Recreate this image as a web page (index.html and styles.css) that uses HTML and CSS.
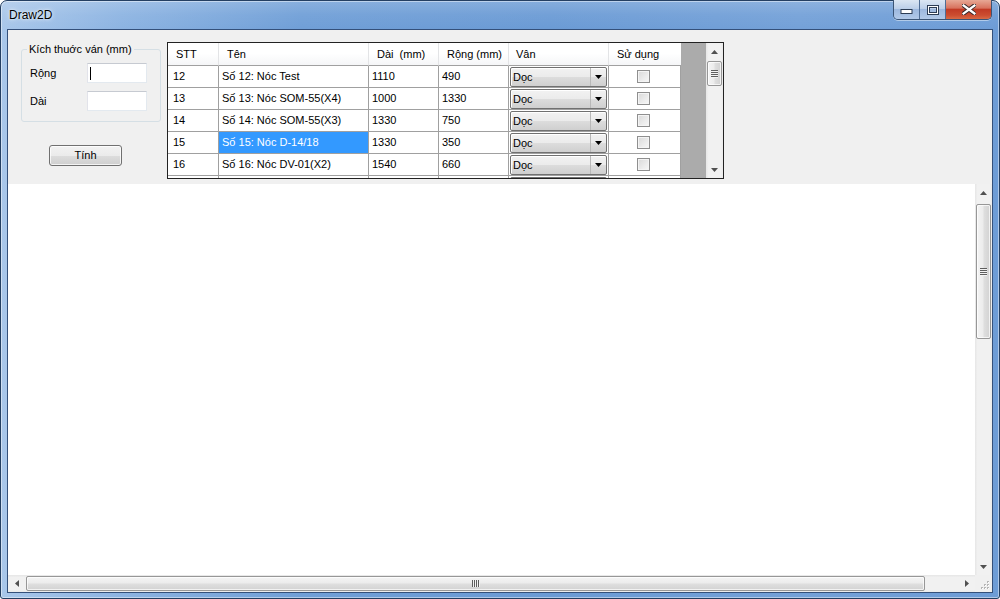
FILE: index.html
```html
<!DOCTYPE html>
<html lang="vi">
<head>
<meta charset="utf-8">
<title>Draw2D</title>
<link rel="stylesheet" href="styles.css">
</head>
<body>
<div class="window">
  <div class="titlebar">
    <span class="title">Draw2D</span>
    <div class="caption">
      <div class="cap">
        <svg width="13" height="7" viewBox="0 0 13 7"><rect x="1" y="2.5" width="11" height="4" fill="#fff" stroke="#2d3d55" stroke-width="1"/></svg>
      </div>
      <div class="cap">
        <svg width="12" height="10" viewBox="0 0 12 10"><rect x="1.5" y="1.5" width="9" height="7" fill="none" stroke="#2d3d55" stroke-width="3"/><rect x="1.5" y="1.5" width="9" height="7" fill="none" stroke="#fff" stroke-width="1"/></svg>
      </div>
      <div class="cap close">
        <svg width="14" height="11" viewBox="0 0 14 11"><path d="M1 1 L13 10 M13 1 L1 10" stroke="#3a2a2a" stroke-width="4.2" stroke-linecap="square"/><path d="M1.5 1.5 L12.5 9.5 M12.5 1.5 L1.5 9.5" stroke="#fff" stroke-width="2.2" stroke-linecap="square"/></svg>
      </div>
    </div>
  </div>
  <div class="frame-body">
    <div class="client">
      <div class="top-panel">
        <div class="side">
          <fieldset class="group">
            <legend>Kích thuớc ván (mm)</legend>
            <div class="field"><span class="label">Rộng</span><div class="textbox"><span class="caret"></span></div></div>
            <div class="field"><span class="label">Dài</span><div class="textbox"></div></div>
          </fieldset>
          <div class="button">Tính</div>
        </div>
        <div class="grid">
          <div class="grid-body">
            <div class="row head">
              <div class="cell h stt">STT</div>
              <div class="cell h">Tên</div>
              <div class="cell h">Dài&nbsp; (mm)</div>
              <div class="cell h">Rộng (mm)</div>
              <div class="cell h van">Vân</div>
              <div class="cell h">Sử dụng</div>
            </div>
            <div class="row">
              <div class="cell stt">12</div><div class="cell">Số 12: Nóc Test</div><div class="cell">1110</div><div class="cell">490</div>
              <div class="cell combo-cell"><div class="combo"><span class="combo-text">Dọc</span><span class="combo-btn"><svg width="7" height="4" viewBox="0 0 7 4"><path d="M0 0H7L3.5 4Z" fill="#000"/></svg></span></div></div>
              <div class="cell check-cell"><span class="check"></span></div>
            </div>
            <div class="row">
              <div class="cell stt">13</div><div class="cell">Số 13: Nóc SOM-55(X4)</div><div class="cell">1000</div><div class="cell">1330</div>
              <div class="cell combo-cell"><div class="combo"><span class="combo-text">Dọc</span><span class="combo-btn"><svg width="7" height="4" viewBox="0 0 7 4"><path d="M0 0H7L3.5 4Z" fill="#000"/></svg></span></div></div>
              <div class="cell check-cell"><span class="check"></span></div>
            </div>
            <div class="row">
              <div class="cell stt">14</div><div class="cell">Số 14: Nóc SOM-55(X3)</div><div class="cell">1330</div><div class="cell">750</div>
              <div class="cell combo-cell"><div class="combo"><span class="combo-text">Dọc</span><span class="combo-btn"><svg width="7" height="4" viewBox="0 0 7 4"><path d="M0 0H7L3.5 4Z" fill="#000"/></svg></span></div></div>
              <div class="cell check-cell"><span class="check"></span></div>
            </div>
            <div class="row">
              <div class="cell stt">15</div><div class="cell selected">Số 15: Nóc D-14/18</div><div class="cell">1330</div><div class="cell">350</div>
              <div class="cell combo-cell"><div class="combo"><span class="combo-text">Dọc</span><span class="combo-btn"><svg width="7" height="4" viewBox="0 0 7 4"><path d="M0 0H7L3.5 4Z" fill="#000"/></svg></span></div></div>
              <div class="cell check-cell"><span class="check"></span></div>
            </div>
            <div class="row">
              <div class="cell stt">16</div><div class="cell">Số 16: Nóc DV-01(X2)</div><div class="cell">1540</div><div class="cell">660</div>
              <div class="cell combo-cell"><div class="combo"><span class="combo-text">Dọc</span><span class="combo-btn"><svg width="7" height="4" viewBox="0 0 7 4"><path d="M0 0H7L3.5 4Z" fill="#000"/></svg></span></div></div>
              <div class="cell check-cell"><span class="check"></span></div>
            </div>
            <div class="row">
              <div class="cell stt"></div><div class="cell"></div><div class="cell"></div><div class="cell"></div>
              <div class="cell combo-cell"><div class="combo"></div></div>
              <div class="cell check-cell"></div>
            </div>
          </div>
          <div class="grid-empty"></div>
          <div class="vscroll small">
            <div class="sb-btn"><svg width="7" height="4" viewBox="0 0 7 4"><path d="M0 4H7L3.5 0Z" fill="#505050"/></svg></div>
            <div class="sb-track">
              <div class="thumb-v small-thumb"><span class="grip-v"></span></div>
            </div>
            <div class="sb-btn"><svg width="7" height="4" viewBox="0 0 7 4"><path d="M0 0H7L3.5 4Z" fill="#505050"/></svg></div>
          </div>
        </div>
      </div>
      <div class="canvas-panel">
        <div class="canvas"></div>
        <div class="vscroll big">
          <div class="sb-btn"><svg width="7" height="4" viewBox="0 0 7 4"><path d="M0 4H7L3.5 0Z" fill="#505050"/></svg></div>
          <div class="sb-track">
            <div class="thumb-v big-thumb"><span class="grip-v"></span></div>
          </div>
          <div class="sb-btn"><svg width="7" height="4" viewBox="0 0 7 4"><path d="M0 0H7L3.5 4Z" fill="#505050"/></svg></div>
        </div>
        <div class="hscroll">
          <div class="sb-btn"><svg width="4" height="7" viewBox="0 0 4 7"><path d="M4 0V7L0 3.5Z" fill="#505050"/></svg></div>
          <div class="sb-track h">
            <div class="thumb-h"><span class="grip-h"></span></div>
          </div>
          <div class="sb-btn"><svg width="4" height="7" viewBox="0 0 4 7"><path d="M0 0V7L4 3.5Z" fill="#505050"/></svg></div>
        </div>
        <div class="corner">
          <svg width="17" height="17" viewBox="0 0 17 17">
            <g fill="#b5b5b5">
              <rect x="12" y="6" width="2" height="2"/>
              <rect x="9" y="9" width="2" height="2"/><rect x="12" y="9" width="2" height="2"/>
              <rect x="6" y="12" width="2" height="2"/><rect x="9" y="12" width="2" height="2"/><rect x="12" y="12" width="2" height="2"/>
            </g>
            <g fill="#fff">
              <rect x="13" y="7" width="1" height="1"/>
              <rect x="10" y="10" width="1" height="1"/><rect x="13" y="10" width="1" height="1"/>
              <rect x="7" y="13" width="1" height="1"/><rect x="10" y="13" width="1" height="1"/><rect x="13" y="13" width="1" height="1"/>
            </g>
          </svg>
        </div>
      </div>
    </div>
  </div>
</div>
</body>
</html>
```
FILE: styles.css
```css
html, body {
  margin: 0;
  padding: 0;
  width: 1000px;
  height: 599px;
  overflow: hidden;
  background: #fff;
  font-family: "Liberation Sans", Arial, sans-serif;
  font-size: 11px;
  color: #000;
}

.window {
  box-sizing: border-box;
  width: 1000px;
  height: 599px;
  border: 1px solid #243f62;
  border-radius: 7px 7px 3px 3px;
  background:
    linear-gradient(180deg, rgba(255,255,255,0.18) 0px, rgba(255,255,255,0.05) 14px, rgba(0,0,0,0) 28px),
    linear-gradient(90deg, #a9c7ea 0%, #8db4e2 12%, #709fd7 30%, #6b9bd5 55%, #74a1d8 80%, #6d9cd6 100%);
  box-shadow: inset 0 0 0 1px rgba(255,255,255,0.45);
  display: flex;
  flex-direction: column;
}

.titlebar {
  flex: none;
  height: 28px;
  display: flex;
  justify-content: space-between;
  align-items: flex-start;
  padding-left: 8px;
}

.title {
  line-height: 29px;
  font-size: 12px;
  color: #000;
  text-shadow: 0 0 5px rgba(255,255,255,0.9), 0 0 2px rgba(255,255,255,0.8);
}

.caption {
  display: flex;
  height: 19px;
  margin: -1px 7px 0 0;
  border: 1px solid #3b5475;
  border-top: none;
  border-radius: 0 0 5px 5px;
  overflow: hidden;
  box-shadow: 0 1px 0 rgba(255,255,255,0.45);
}

.cap {
  width: 26px;
  border-right: 1px solid #4f6d95;
  background: linear-gradient(180deg, #dbe6f3 0%, #bccfe9 45%, #9db8de 50%, #b2c9e8 100%);
  display: flex;
  align-items: flex-start;
  justify-content: center;
  padding-top: 5px;
  box-sizing: border-box;
}

.cap:first-child {
  padding-top: 7px;
}

.cap.close {
  width: 45px;
  border-right: none;
  background: linear-gradient(180deg, #e7a895 0%, #d8735e 42%, #c23b25 50%, #cc4d30 80%, #d86a45 100%);
  padding-top: 4px;
}

.frame-body {
  flex: 1;
  display: flex;
  padding: 0 6px 5px 6px;
}

.client {
  flex: 1;
  display: flex;
  flex-direction: column;
  border: 1px solid #34507a;
  background: #f0f0f0;
}

/* top panel */
.top-panel {
  flex: none;
  height: 154px;
  display: flex;
}

.side {
  flex: none;
  width: 159px;
  box-sizing: border-box;
  padding: 13px 0 0 13px;
}

.group {
  box-sizing: border-box;
  width: 140px;
  margin: 0;
  padding: 7px 0 10px 8px;
  border: 1px solid #d5dfe5;
  border-radius: 3px;
  min-inline-size: 0;
}

.group legend {
  padding: 0 2px;
  margin-left: -3px;
  line-height: 13px;
  font-size: 11px;
}

.field {
  display: flex;
  align-items: center;
  height: 20px;
}

.field + .field {
  margin-top: 8px;
}

.label {
  width: 57px;
  flex: none;
}

.textbox {
  box-sizing: border-box;
  width: 60px;
  height: 20px;
  background: #fff;
  border: 1px solid;
  border-color: #c6cad1 #e3e9ef #e3e9ef #e2e3ea;
  display: flex;
  align-items: center;
  padding-left: 2px;
}

.caret {
  width: 1px;
  height: 13px;
  background: #000;
}

.button {
  box-sizing: border-box;
  width: 73px;
  height: 21px;
  margin: 23px 0 0 28px;
  border: 1px solid #707070;
  border-radius: 3px;
  background: linear-gradient(180deg, #f2f2f2 0%, #ebebeb 50%, #dddddd 50%, #cfcfcf 100%);
  box-shadow: inset 0 0 0 1px rgba(255,255,255,0.75);
  display: flex;
  align-items: center;
  justify-content: center;
  line-height: 19px;
}

/* data grid */
.grid {
  flex: none;
  box-sizing: border-box;
  width: 557px;
  height: 137px;
  margin-top: 12px;
  border: 1px solid #222;
  display: flex;
  background: #ababab;
}

.grid-body {
  flex: none;
  width: 513px;
  overflow: hidden;
  background: #fff;
}

.grid-empty {
  flex: 1;
  background: #ababab;
}

.row {
  display: grid;
  grid-template-columns: 51px 150px 70px 70px 100px 72px;
  height: 22px;
}

.row.head {
  height: 23px;
  background: linear-gradient(180deg, #ffffff 0%, #ffffff 45%, #f4f5f7 100%);
}

.cell {
  box-sizing: border-box;
  border-right: 1px solid #a0a0a0;
  border-bottom: 1px solid #a0a0a0;
  padding-left: 3px;
  line-height: 21px;
  white-space: nowrap;
  overflow: hidden;
}

.cell.stt {
  padding-left: 5px;
}

.cell.h {
  padding-left: 8px;
  line-height: 23px;
  border-right-color: #e3e4e6;
  border-bottom-color: #a0a0a0;
}

.cell.h.stt {
  padding-left: 8px;
}

.cell.h.van {
  padding-left: 7px;
}

.cell.h:last-child {
  border-right: none;
}

.cell.selected {
  background: #3399ff;
  color: #fff;
}

.cell.combo-cell {
  padding: 1px 0 0 1px;
}

.combo {
  box-sizing: border-box;
  width: 97px;
  height: 20px;
  border: 1px solid #707070;
  border-radius: 2px;
  background: linear-gradient(180deg, #f2f2f2 0%, #ebebeb 50%, #dddddd 50%, #cfcfcf 100%);
  box-shadow: inset 1px 1px 0 #fff;
  display: flex;
  align-items: stretch;
}

.combo-text {
  flex: 1;
  padding-left: 2px;
  line-height: 18px;
}

.combo-btn {
  width: 15px;
  border-left: 1px solid #b8b8b8;
  display: flex;
  align-items: center;
  justify-content: center;
}

.cell.check-cell {
  padding: 0;
  display: flex;
  align-items: center;
  justify-content: center;
}

.check {
  box-sizing: border-box;
  width: 13px;
  height: 13px;
  border: 1px solid #8f8f8f;
  background: linear-gradient(135deg, #d9d9d9 0%, #ececec 60%, #f7f7f7 100%);
  box-shadow: inset 0 0 0 1px #f4f4f4;
  margin-left: -2px;
}

/* scrollbars */
.vscroll {
  width: 17px;
  flex: none;
  display: flex;
  flex-direction: column;
  background: linear-gradient(90deg, #e6e6e6 0%, #f1f1f1 15%, #f1f1f1 85%, #ebebeb 100%);
}

.sb-btn {
  flex: none;
  width: 17px;
  height: 17px;
  display: flex;
  align-items: center;
  justify-content: center;
}

.sb-track {
  flex: 1;
  display: flex;
  flex-direction: column;
  align-items: center;
}

.thumb-v {
  box-sizing: border-box;
  width: 15px;
  border: 1px solid #979797;
  border-radius: 2px;
  background: linear-gradient(90deg, #f4f4f4 0%, #ececec 45%, #dedede 55%, #d2d2d2 100%);
  box-shadow: inset 0 0 0 1px rgba(255,255,255,0.7);
  display: flex;
  align-items: center;
  justify-content: center;
}

.small-thumb {
  height: 25px;
  margin-top: 1px;
}

.big-thumb {
  height: 135px;
  margin-top: 3px;
}

.grip-v {
  width: 7px;
  height: 8px;
  background: repeating-linear-gradient(180deg, #5e5e5e 0 1px, #f2f2f2 1px 2px);
}

.canvas-panel {
  flex: 1;
  display: grid;
  grid-template-columns: 1fr 17px;
  grid-template-rows: 1fr 17px;
}

.canvas {
  background: #fff;
}

.hscroll {
  display: flex;
  background: linear-gradient(180deg, #e6e6e6 0%, #f1f1f1 15%, #f1f1f1 85%, #ebebeb 100%);
}

.sb-track.h {
  flex-direction: row;
  align-items: center;
}

.thumb-h {
  box-sizing: border-box;
  width: 899px;
  height: 15px;
  margin-left: 1px;
  border: 1px solid #979797;
  border-radius: 2px;
  background: linear-gradient(180deg, #f4f4f4 0%, #ececec 45%, #dedede 55%, #d2d2d2 100%);
  box-shadow: inset 0 0 0 1px rgba(255,255,255,0.7);
  display: flex;
  align-items: center;
  justify-content: center;
}

.grip-h {
  width: 8px;
  height: 7px;
  background: repeating-linear-gradient(90deg, #5e5e5e 0 1px, #f2f2f2 1px 2px);
}

.corner {
  background: #f0f0f0;
  display: flex;
}
```
